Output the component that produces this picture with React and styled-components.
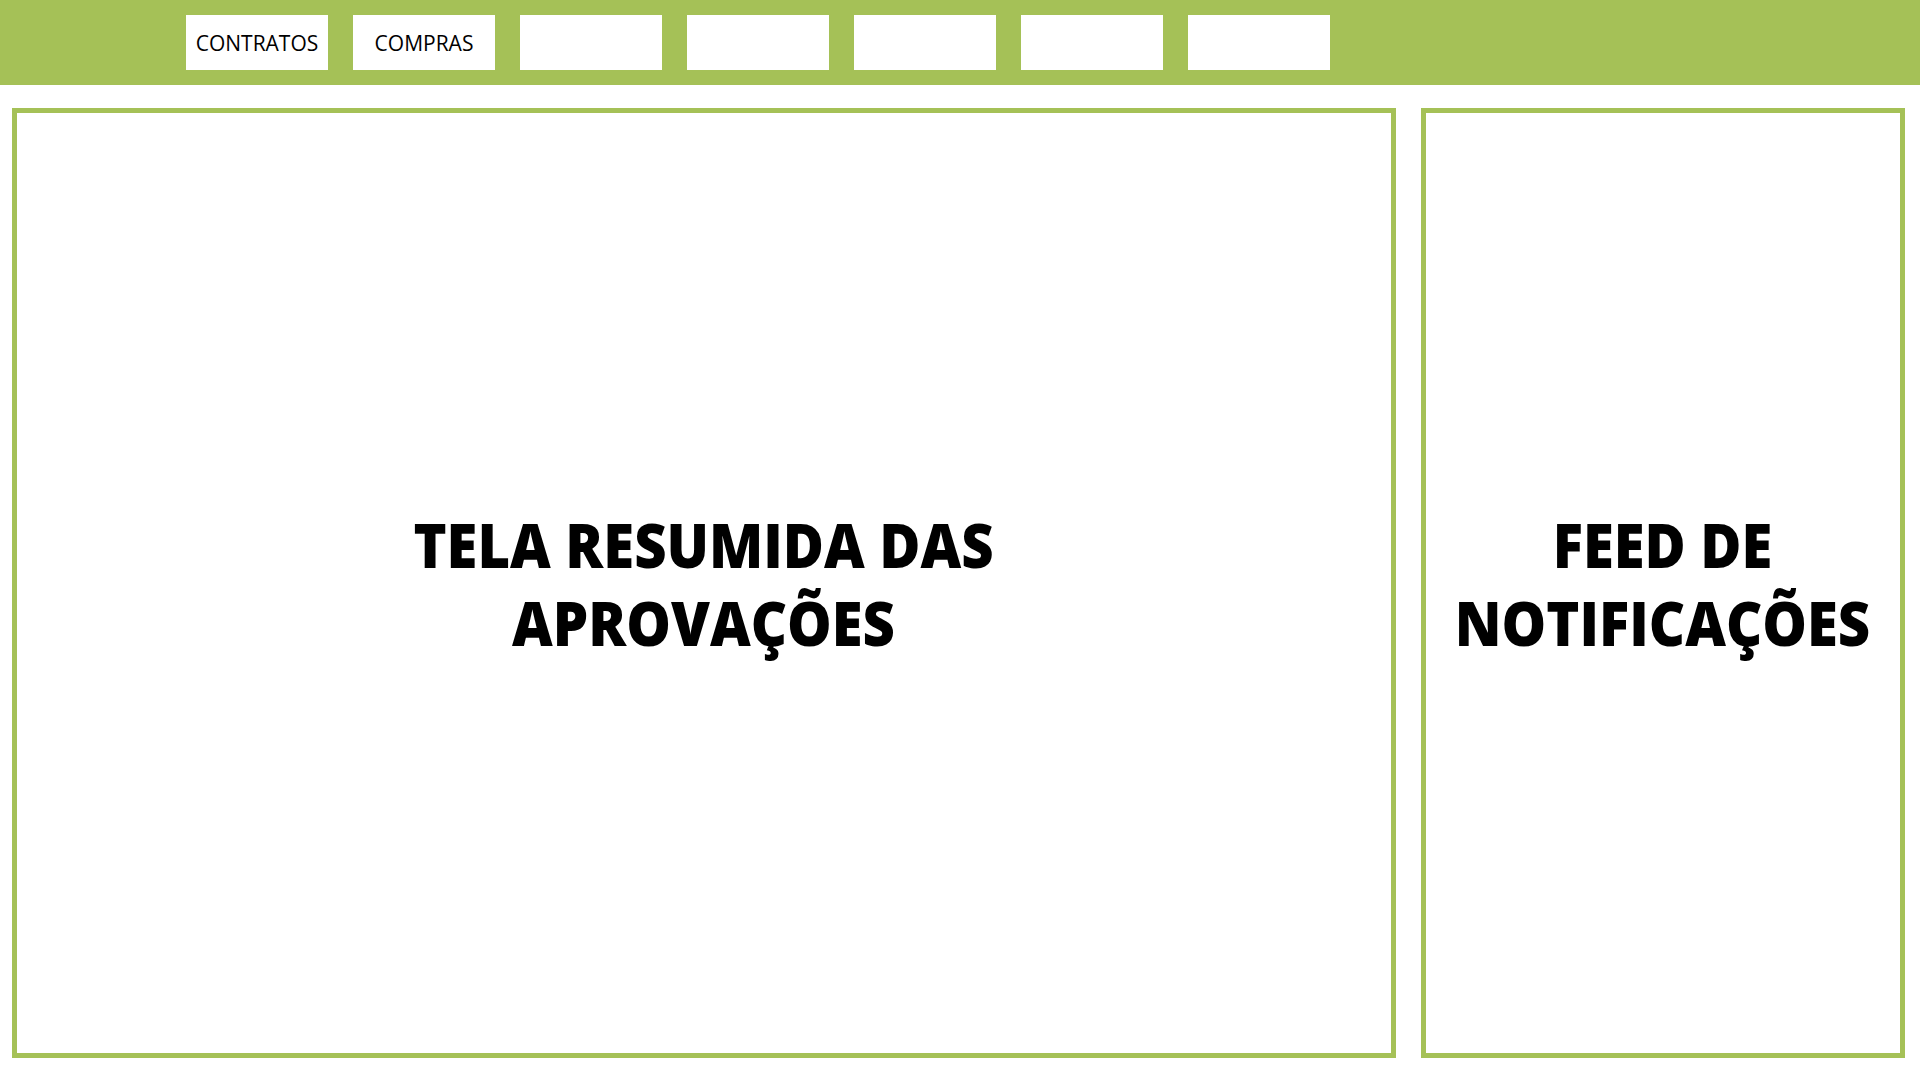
import React from 'react';
import styled, { createGlobalStyle } from 'styled-components';

const GlobalStyle = createGlobalStyle`
  html, body {
    margin: 0;
    padding: 0;
    background: #fff;
    font-family: "Open Sans", "Liberation Sans", sans-serif;
  }
`;

const Page = styled.div`
  width: 1920px;
  height: 1080px;
  display: flex;
  flex-direction: column;
  background: #fff;
`;

const TopBar = styled.header`
  height: 85px;
  background-color: #a5c157;
  display: flex;
  align-items: center;
  gap: 25px;
  padding-left: 186px;
  box-sizing: border-box;
`;

const Tab = styled.div`
  width: 142px;
  height: 55px;
  background: #fff;
  display: flex;
  align-items: center;
  justify-content: center;
  font-size: 21px;
  color: #000;
`;

const Body = styled.main`
  flex: 1;
  display: flex;
  gap: 25px;
  padding: 23px 15px 22px 12px;
  box-sizing: border-box;
`;

const Panel = styled.section`
  width: ${({ width }) => width}px;
  border: 5px solid #a5c157;
  box-sizing: border-box;
  display: flex;
  align-items: center;
  justify-content: center;
`;

// the headings in the mockup are a touch narrower than Open Sans
const PanelTitle = styled.h1`
  margin: 0;
  font-size: 62px;
  font-weight: 800;
  line-height: 78px;
  text-align: center;
  color: #000;
  white-space: nowrap;
  transform: scaleX(0.905);
`;

const tabs = ['CONTRATOS', 'COMPRAS', '', '', '', '', ''];

const App = () => {
  return (
    <>
      <GlobalStyle />
      <Page>
        <TopBar>
          {tabs.map((t, i) => (
            <Tab key={i}>{t}</Tab>
          ))}
        </TopBar>
        <Body>
          <Panel width={1384}>
            <PanelTitle>
              TELA RESUMIDA DAS
              <br />
              APROVAÇÕES
            </PanelTitle>
          </Panel>
          <Panel width={484}>
            <PanelTitle>
              FEED DE
              <br />
              NOTIFICAÇÕES
            </PanelTitle>
          </Panel>
        </Body>
      </Page>
    </>
  );
};

export default App;
